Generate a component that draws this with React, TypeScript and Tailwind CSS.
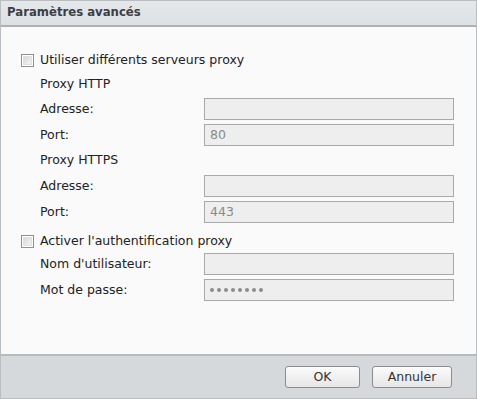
import React from "react";

function Checkbox() {
  return (
    <span className="box-border inline-block w-[13px] h-[13px] border border-[#8f8f8f] bg-white p-px shrink-0">
      <span className="block w-full h-full bg-gradient-to-br from-[#d8d8d8] to-[#f4f4f4] border border-[#e0e0e0]" />
    </span>
  );
}

function Dots() {
  return (
    <span className="flex gap-[3px]">
      {Array.from({ length: 8 }).map((_, i) => (
        <span key={i} className="block w-[4px] h-[4px] rounded-full bg-[#8c8c8c]" />
      ))}
    </span>
  );
}

function Field({ label, value, dots, mt }: { label: string; value?: string; dots?: boolean; mt: string }) {
  return (
    <div className={`flex items-center h-[22px] ${mt}`}>
      <span className="w-[164px] shrink-0 text-[12.5px] text-[#222]">{label}</span>
      <div className="box-border w-[250px] h-[22px] border border-[#a9a9a9] bg-[#eeeeee] flex items-center pl-[5px] text-[12.5px] text-[#8a8a8a]">
        {dots ? <Dots /> : value}
      </div>
    </div>
  );
}

export default function App() {
  return (
    <div
      className="box-border w-[477px] h-[399px] flex flex-col border border-[#b9bdc0] bg-[#fafafa]"
      style={{ fontFamily: "'DejaVu Sans', Verdana, sans-serif" }}
    >
      <div className="h-[26px] shrink-0 bg-gradient-to-b from-[#e4e8eb] to-[#dde1e4] border-b-2 border-[#aeb0b2] flex items-center pl-[6px]">
        <span className="text-[11.7px] font-bold text-[#3b4046]">Paramètres avancés</span>
      </div>
      <div className="flex-1 flex flex-col pl-[39px] pt-[22px]">
        <div className="flex items-center h-[22px] -ml-[19px]">
          <Checkbox />
          <span className="ml-[6px] text-[12.5px] text-[#222]">Utiliser différents serveurs proxy</span>
        </div>
        <div className="flex items-center h-[22px] mt-[2px] text-[12.5px] text-[#222]">Proxy HTTP</div>
        <Field label="Adresse:" mt="mt-[3px]" />
        <Field label="Port:" value="80" mt="mt-[4px]" />
        <div className="flex items-center h-[22px] mt-[3px] text-[12.5px] text-[#222]">Proxy HTTPS</div>
        <Field label="Adresse:" mt="mt-[4px]" />
        <Field label="Port:" value="443" mt="mt-[4px]" />
        <div className="flex items-center h-[22px] mt-[7px] -ml-[19px]">
          <Checkbox />
          <span className="ml-[6px] text-[12.5px] text-[#222]">Activer l'authentification proxy</span>
        </div>
        <Field label="Nom d'utilisateur:" mt="mt-[1px]" />
        <Field label="Mot de passe:" dots mt="mt-[4px]" />
      </div>
      <div className="h-[44px] shrink-0 border-t-2 border-[#b8bbbe] bg-[#d5d9dc] flex items-center justify-end pr-[24px] gap-[12px]">
        <button className="box-border w-[75px] h-[22px] rounded-[3px] border border-[#8c8c8c] bg-gradient-to-b from-[#fbfbfb] to-[#e6e6e6] text-[12.5px] text-[#333]">
          OK
        </button>
        <button className="box-border w-[80px] h-[22px] rounded-[3px] border border-[#8c8c8c] bg-gradient-to-b from-[#fbfbfb] to-[#e6e6e6] text-[12.5px] text-[#333]">
          Annuler
        </button>
      </div>
    </div>
  );
}
